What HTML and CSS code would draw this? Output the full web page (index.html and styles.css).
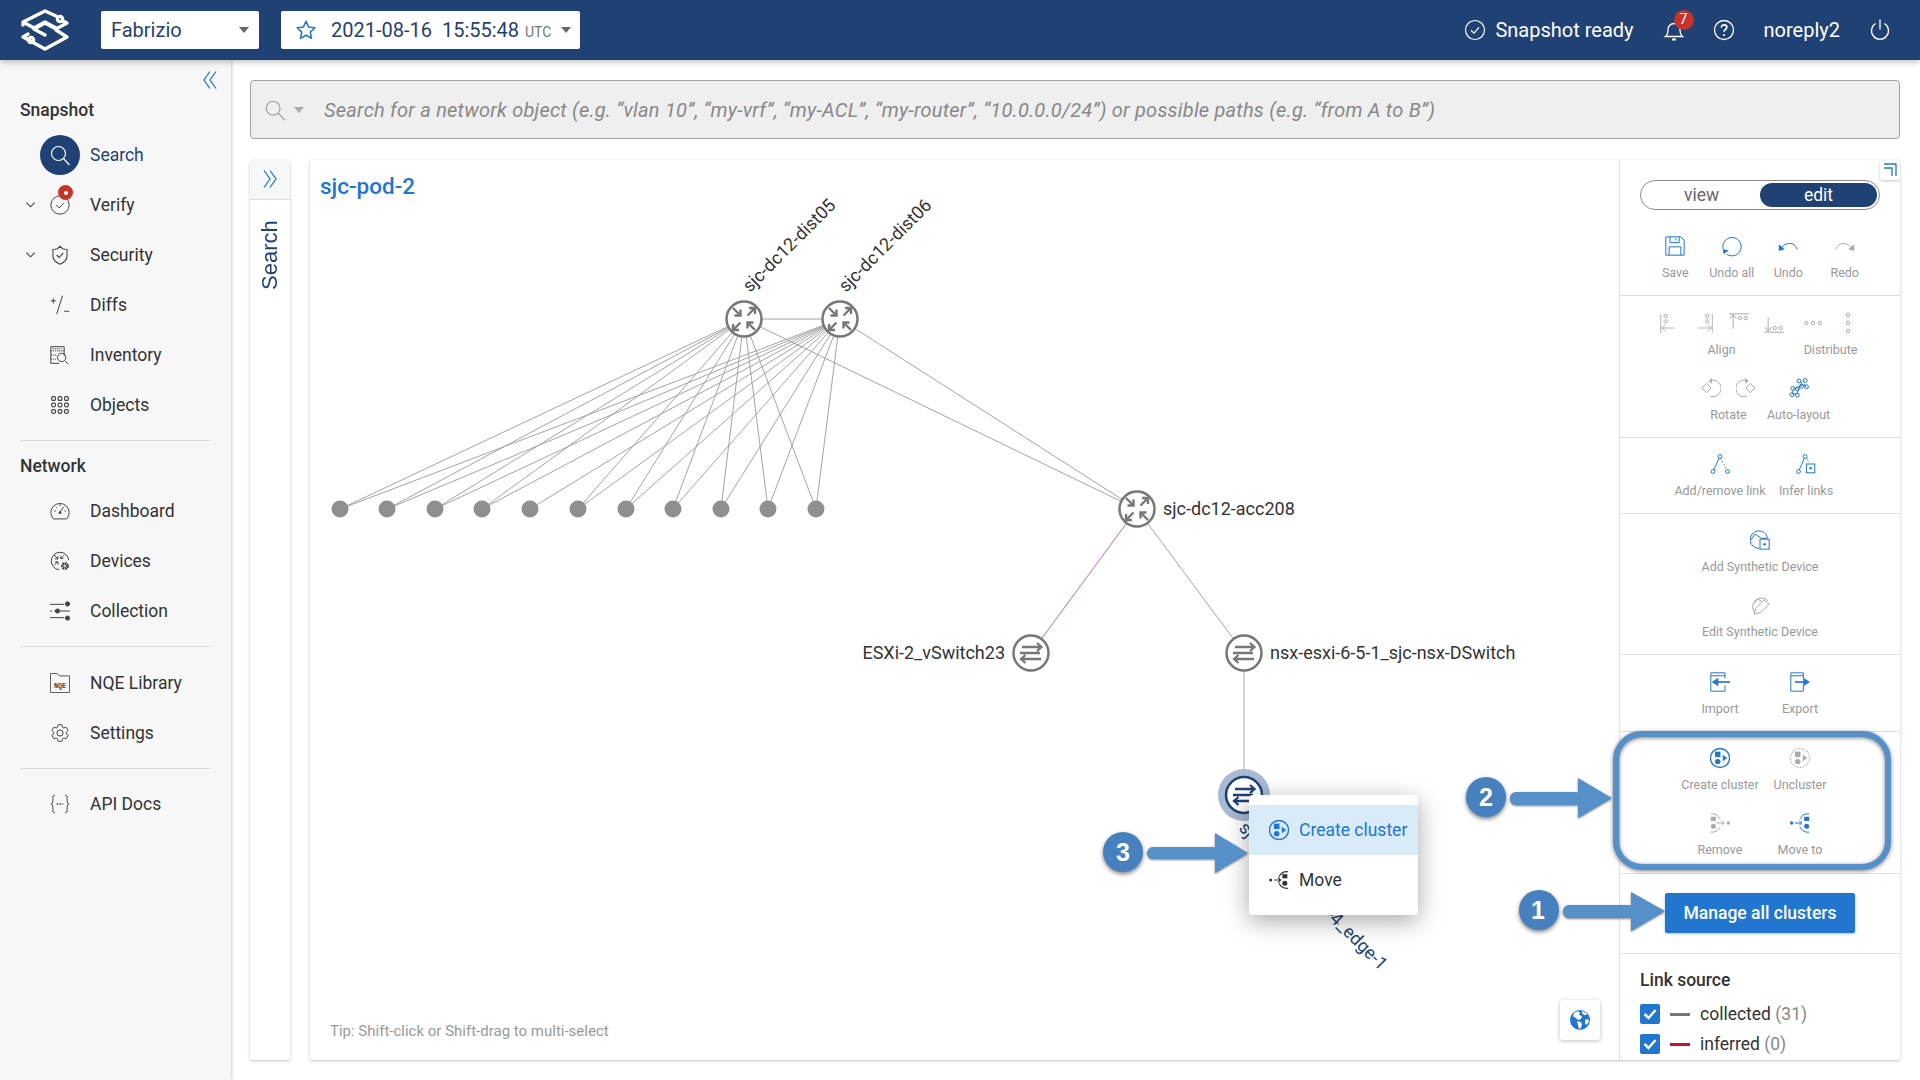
FILE: index.html
```html
<!DOCTYPE html>
<html lang="en">
<head>
<meta charset="utf-8">
<title>sjc-pod-2</title>
<link rel="stylesheet" href="styles.css">
</head>
<body>
<header class="topbar">
  <svg class="logo" viewBox="0 0 50 42" fill="none" stroke="#fff" stroke-width="3.4" stroke-linejoin="round" stroke-linecap="round">
    <path d="M36 7 25 2 3 13l11 6 11-6 11 6"/><path d="M43 12l4 2-11 6-11-6-11 6 11 6"/>
    <path d="M36 21l11 7-22 12L3 28l5-3"/><path d="M3 16l0-1"/>
    <circle cx="40" cy="10" r="2.6"/><circle cx="11" cy="31" r="2.6"/>
  </svg>
  <div class="select select-net"><span class="select-text">Fabrizio</span><i class="caret"></i></div>
  <div class="select select-date">
    <svg class="star" viewBox="0 0 24 24" fill="none" stroke="#2176cf" stroke-width="1.7" stroke-linejoin="round"><path d="M12 2.5l2.9 6.3 6.8.8-5 4.7 1.3 6.8-6-3.4-6 3.4 1.3-6.8-5-4.7 6.8-.8z"/></svg>
    <span class="select-text">2021-08-16&nbsp; 15:55:48</span><span class="utc">UTC</span><i class="caret"></i>
  </div>
  <div class="top-right">
    <svg class="ti" viewBox="0 0 24 24" fill="none" stroke="#fff" stroke-width="1.2"><circle cx="12" cy="12" r="9.5"/><path d="M8 12.3l3 2.8 5-5.8"/></svg>
    <span class="status">Snapshot ready</span>
    <div class="bell">
      <svg class="ti" viewBox="0 0 24 24" fill="none" stroke="#fff" stroke-width="1.3"><path d="M3.5 18.5c2-1.5 2.5-3.5 2.5-7 0-3.5 2.700-6 6-6s6 2.500 6 6c0 3.500.5 5.500 2.500 7z"/><path d="M10 21.500h4" stroke-width="2"/></svg>
      <span class="badge">7</span>
    </div>
    <svg class="ti help" viewBox="0 0 24 24" fill="none" stroke="#fff" stroke-width="1.3"><circle cx="12" cy="12" r="9.500"/><path d="M9.300 9.500c0-1.600 1.200-2.700 2.800-2.700s2.700 1 2.700 2.400c0 2.300-2.800 2.300-2.800 4.600" stroke-width="1.700"/><circle cx="12" cy="17" r="1" fill="#fff" stroke="none"/></svg>
    <span class="user">noreply2</span>
    <svg class="ti power" viewBox="0 0 24 24" fill="none" stroke="#fff" stroke-width="1.3"><path d="M7.500 5.500a8.500 8.500 0 1 0 9 0"/><path d="M12 1.500v10"/></svg>
  </div>
</header>

<div class="page">
  <nav class="sidebar">
    <div class="collapse-row"><svg class="dbl" viewBox="0 0 14 20" fill="none" stroke="#2176cf" stroke-width="1.300"><path d="M7 1.500 1 10l6 8.500M13 1.500 7 10l6 8.500"/></svg></div>
    <div class="nav-head first">Snapshot</div>
    <div class="nav-row">
      <span class="nav-icon active"><svg viewBox="0 0 24 24" fill="none" stroke="#fff" stroke-width="1.200"><circle cx="10.500" cy="10.500" r="7"/><path d="M15.500 15.500l6 6.500"/></svg></span>
      <span class="nav-text nav-active">Search</span>
    </div>
    <div class="nav-row">
      <svg class="chev" viewBox="0 0 12 8" fill="none" stroke="#444" stroke-width="1.200"><path d="M1.500 1.500 6 6l4.500-4.500"/></svg>
      <span class="nav-icon"><svg viewBox="0 0 24 24" fill="none" stroke="#444" stroke-width="1.200"><circle cx="12" cy="12" r="11"/><path d="M7.500 12l3.500 3.500 5.500-6"/></svg><i class="dot"></i></span>
      <span class="nav-text">Verify</span>
    </div>
    <div class="nav-row">
      <svg class="chev" viewBox="0 0 12 8" fill="none" stroke="#444" stroke-width="1.200"><path d="M1.500 1.500 6 6l4.500-4.500"/></svg>
      <span class="nav-icon"><svg viewBox="0 0 24 24" fill="none" stroke="#444" stroke-width="1.300"><path d="M12 1.500l3 3 5.500 1v8c0 4-4 7.500-8.500 9.500-4.500-2-8.500-5.500-8.500-9.500v-8l5.500-1z"/><path d="M8 12l3 3 5-5.500"/></svg></span>
      <span class="nav-text">Security</span>
    </div>
    <div class="nav-row">
      <span class="nav-icon"><svg viewBox="0 0 24 24" fill="none" stroke="#444" stroke-width="1.200"><path d="M15 1 8 23M1 7h6M4 4v6M17 19.500h6"/></svg></span>
      <span class="nav-text">Diffs</span>
    </div>
    <div class="nav-row">
      <span class="nav-icon"><svg viewBox="0 0 24 24" fill="none" stroke="#444" stroke-width="1.200"><path d="M17 13V2H1v20h10"/><path d="M1 7h16M1 12h7M1 17h6M3 4.500h11" stroke-dasharray="1.500 1"/><circle cx="14" cy="15" r="5"/><path d="M18 19l4 4"/></svg></span>
      <span class="nav-text">Inventory</span>
    </div>
    <div class="nav-row">
      <span class="nav-icon"><svg viewBox="0 0 24 24" fill="none" stroke="#444" stroke-width="1.400"><rect x="2" y="2" width="4.500" height="4.500" rx="1.500"/><rect x="9.700" y="2" width="4.500" height="4.500" rx="1.500"/><rect x="17.500" y="2" width="4.500" height="4.500" rx="1.500"/><rect x="2" y="9.700" width="4.500" height="4.500" rx="1.500"/><rect x="9.700" y="9.700" width="4.500" height="4.500" rx="1.500"/><rect x="17.500" y="9.700" width="4.500" height="4.500" rx="1.500"/><rect x="2" y="17.500" width="4.500" height="4.500" rx="1.500"/><rect x="9.700" y="17.500" width="4.500" height="4.500" rx="1.500"/><rect x="17.500" y="17.500" width="4.500" height="4.500" rx="1.500"/></svg></span>
      <span class="nav-text">Objects</span>
    </div>
    <hr class="nav-rule">
    <div class="nav-head">Network</div>
    <div class="nav-row">
      <span class="nav-icon"><svg viewBox="0 0 24 24" fill="none" stroke="#444" stroke-width="1.200"><path d="M4 21.500a11 11 0 1 1 16 0z"/><path d="M12 13l4.500-6M12 4v2M5 12h2M19 12h-1.500M7 7l1 1" /><circle cx="12" cy="14" r="1.200" fill="#444"/></svg></span>
      <span class="nav-text">Dashboard</span>
    </div>
    <div class="nav-row">
      <span class="nav-icon"><svg viewBox="0 0 24 24" fill="none" stroke="#444" stroke-width="1.200"><path d="M11 22.500A10.500 10.500 0 1 1 22.500 11"/><path d="M5 5l4.500 4.500M9.500 6v3.500H6M17 5l-4 4M13 6v3h3M5 17l4-4M6 13h3.500v3.500"/><circle cx="18" cy="18" r="3" stroke-width="3.500" stroke-dasharray="2 .7"/></svg></span>
      <span class="nav-text">Devices</span>
    </div>
    <div class="nav-row">
      <span class="nav-icon"><svg viewBox="0 0 24 24" fill="none" stroke="#444" stroke-width="1.200"><path d="M0 4h17M0 12h2.500M5 12h1.500M12 12h12M0 20h17"/><circle cx="21" cy="3.500" r="2.500" fill="#444"/><circle cx="9" cy="12" r="2.500" fill="#444"/><circle cx="21" cy="20.500" r="2.500" fill="#444"/></svg></span>
      <span class="nav-text">Collection</span>
    </div>
    <hr class="nav-rule">
    <div class="nav-row">
      <span class="nav-icon"><svg viewBox="0 0 24 24" fill="none" stroke="#444" stroke-width="1.100"><path d="M0.500 23.500V.5h8l3 3h12v20z"/><text x="12" y="17.500" text-anchor="middle" class="nqe-text">NQE</text></svg></span>
      <span class="nav-text">NQE Library</span>
    </div>
    <div class="nav-row">
      <span class="nav-icon"><svg viewBox="0 0 24 24" fill="none" stroke="#444" stroke-width="1.200"><path d="M19.430 12.980c.04-.32.07-.64.07-.98s-.03-.66-.07-.98l2.110-1.650c.19-.15.24-.42.12-.64l-2-3.460c-.12-.22-.39-.3-.61-.22l-2.490 1c-.52-.4-1.080-.73-1.690-.98l-.38-2.650C14.460 2.180 14.250 2 14 2h-4c-.25 0-.46.18-.49.42l-.38 2.650c-.61.25-1.170.59-1.690.98l-2.490-1c-.23-.09-.49 0-.61.22l-2 3.460c-.13.22-.07.49.12.64l2.110 1.650c-.04.32-.07.65-.07.98s.03.66.07.98l-2.110 1.650c-.19.15-.24.42-.12.64l2 3.460c.12.22.39.3.61.22l2.490-1c.52.4 1.080.73 1.690.98l.38 2.650c.03.24.24.42.49.42h4c.25 0 .46-.18.49-.42l.38-2.650c.61-.25 1.170-.59 1.690-.98l2.490 1c.23.09.49 0 .61-.22l2-3.460c.12-.22.07-.49-.12-.64l-2.110-1.650z"/><circle cx="12" cy="12" r="3.700"/></svg></span>
      <span class="nav-text">Settings</span>
    </div>
    <hr class="nav-rule nav-rule-tight">
    <div class="nav-row">
      <span class="nav-icon"><svg viewBox="0 0 24 24" fill="none" stroke="#444" stroke-width="1.200"><path d="M6 1.500C3 1.500 3.500 4 3.500 7.500c0 3-1 4.500-2.500 4.500 1.500 0 2.500 1.500 2.500 4.500 0 3.500-.5 6 2.500 6M18 1.500c3 0 2.500 2.500 2.500 6 0 3 1 4.500 2.500 4.500-1.500 0-2.500 1.500-2.500 4.500 0 3.500.5 6-2.500 6"/><path d="M8 12h8" stroke-width="2" stroke-dasharray="2 1.500"/></svg></span>
      <span class="nav-text">API Docs</span>
    </div>
  </nav>

  <main class="main">
    <div class="searchbar">
      <svg class="sb-icon" viewBox="0 0 24 24" fill="none" stroke="#999" stroke-width="1.200"><circle cx="10" cy="10" r="7.500"/><path d="M15.500 15.500l7 7.500"/></svg>
      <i class="caret caret-gray"></i>
      <span class="placeholder">Search for a network object (e.g. “vlan 10”, “my-vrf”, “my-ACL”, “my-router”, “10.0.0.0/24”) or possible paths (e.g. “from A to B”)</span>
    </div>
    <div class="workspace">
      <aside class="sidetab">
        <div class="sidetab-top"><svg class="dbl" viewBox="0 0 14 20" fill="none" stroke="#2176cf" stroke-width="1.300"><path d="M1 1.500 7 10l-6 8.500M7 1.500 13 10l-6 8.500"/></svg></div>
        <div class="sidetab-label">Search</div>
      </aside>
      <section class="canvas">
        <div class="graph">
          <h1 class="graph-title">sjc-pod-2</h1>
          <svg class="graph-svg" viewBox="310 160 1309 900">
            <defs>
              <g id="router">
                <circle r="17.500" fill="#fff" stroke="#777" stroke-width="2.500"/>
                <g fill="none" stroke="#777" stroke-width="2.400">
                  <path d="M-11-11-3.500-3.500M-3.500-9.500v6h-6"/>
                  <path d="M3.500-3.500 11-11M5-11h6v6"/>
                  <path d="M-3.500 3.500-11 11M-11 5v6h6"/>
                  <path d="M11 11 3.500 3.500M3.500 9.500v-6h6"/>
                </g>
              </g>
              <g id="switch">
                <circle r="17.500" fill="#fff" stroke="#777" stroke-width="2.500"/>
                <g fill="none" stroke="#777" stroke-width="2.300">
                  <path d="M-9-6H10M6-10l4.500 4-4.500 4M-11 0H9M-10 6H10M-5.500 2-10 6l4.500 4"/>
                </g>
              </g>
              <g id="switch-sel">
                <circle r="26" fill="#a9bbd2"/>
                <circle r="18" fill="#fff" stroke="#1f4173" stroke-width="2.500"/>
                <g fill="none" stroke="#1f4173" stroke-width="2.300">
                  <path d="M-9-6H10M6-10l4.500 4-4.500 4M-11 0H9M-10 6H10M-5.500 2-10 6l4.500 4"/>
                </g>
              </g>
            </defs>
            <g class="links">
              <line x1="744" y1="319" x2="840" y2="319"/>
              <line x1="744" y1="319" x2="340" y2="509"/><line x1="744" y1="319" x2="387" y2="509"/><line x1="744" y1="319" x2="435" y2="509"/><line x1="744" y1="319" x2="482" y2="509"/><line x1="744" y1="319" x2="578" y2="509"/><line x1="744" y1="319" x2="626" y2="509"/><line x1="744" y1="319" x2="673" y2="509"/><line x1="744" y1="319" x2="721" y2="509"/><line x1="744" y1="319" x2="768" y2="509"/><line x1="744" y1="319" x2="816" y2="509"/>
              <line x1="840" y1="319" x2="340" y2="509"/><line x1="840" y1="319" x2="387" y2="509"/><line x1="840" y1="319" x2="435" y2="509"/><line x1="840" y1="319" x2="482" y2="509"/><line x1="840" y1="319" x2="530" y2="509"/><line x1="840" y1="319" x2="578" y2="509"/><line x1="840" y1="319" x2="626" y2="509"/><line x1="840" y1="319" x2="673" y2="509"/><line x1="840" y1="319" x2="721" y2="509"/><line x1="840" y1="319" x2="768" y2="509"/><line x1="840" y1="319" x2="816" y2="509"/>
              <line x1="744" y1="319" x2="1137" y2="509"/><line x1="840" y1="319" x2="1137" y2="509"/>
              <line x1="1137" y1="509" x2="1244" y2="653"/><line x1="1244" y1="653" x2="1244" y2="795"/>
              <line class="link-purple" x1="1137" y1="509" x2="1031" y2="653"/>
            </g>
            <g class="leaves">
              <circle cx="340" cy="509" r="8.500"/><circle cx="387" cy="509" r="8.500"/><circle cx="435" cy="509" r="8.500"/><circle cx="482" cy="509" r="8.500"/><circle cx="530" cy="509" r="8.500"/><circle cx="578" cy="509" r="8.500"/><circle cx="626" cy="509" r="8.500"/><circle cx="673" cy="509" r="8.500"/><circle cx="721" cy="509" r="8.500"/><circle cx="768" cy="509" r="8.500"/><circle cx="816" cy="509" r="8.500"/>
            </g>
            <use href="#router" x="744" y="319"/>
            <use href="#router" x="840" y="319"/>
            <use href="#router" x="1137" y="509"/>
            <use href="#switch" x="1031" y="653"/>
            <use href="#switch" x="1244" y="653"/>
            <use href="#switch-sel" x="1244" y="795"/>
            <text class="node-label" transform="translate(750 293) rotate(-45)">sjc-dc12-dist05</text>
            <text class="node-label" transform="translate(846 293) rotate(-45)">sjc-dc12-dist06</text>
            <text class="node-label" x="1163" y="515">sjc-dc12-acc208</text>
            <text class="node-label" x="1005" y="659" text-anchor="end">ESXi-2_vSwitch23</text>
            <text class="node-label" x="1270" y="659">nsx-esxi-6-5-1_sjc-nsx-DSwitch</text>
            <text class="node-label node-label-sel" transform="translate(1238 829) rotate(45)">sjc-nsx-esxi-6-5-4_edge-1</text>
          </svg>
          <div class="tip">Tip: Shift-click or Shift-drag to multi-select</div>
          <div class="globe-btn">
            <svg viewBox="0 0 24 24"><circle cx="12" cy="12" r="10" fill="#2176cf"/><path fill="#fff" d="M6 5l4-2 2 2-1 2 3 1-1 3-3 1-2-2-2-1-1-1zM14 3l4 2 1 2-3 0-2-2zM9 13l4 1 1 3-2 4-1 0-1-4zM17 12l3-1 1 3-3 3-1-2z"/></svg>
          </div>
          <div class="context-menu">
            <div class="menu-row menu-row-hi">
              <svg class="menu-icon" viewBox="1 1 22 22" fill="none" stroke="#2176cf" stroke-width="1.500"><circle cx="12" cy="12" r="10.500"/><rect x="6.500" y="5" width="6" height="6" fill="#2176cf" stroke="none"/><circle cx="9.500" cy="16" r="3" fill="#2176cf" stroke="none"/><path d="M15 8.500l5 3.500-5 3.500z" fill="#2176cf" stroke="none"/></svg>
              <span>Create cluster</span>
            </div>
            <div class="menu-row">
              <svg class="menu-icon" viewBox="0 0 24 24" fill="none" stroke="#333" stroke-width="1.300"><circle cx="2" cy="12" r="1.800" fill="#333" stroke="none"/><path d="M6 12h8M11 9l3 3-3 3"/><path d="M23 2a11 11 0 0 0-11 6M23 22a11 11 0 0 1-11-6"/><rect x="16" y="5" width="6" height="5" fill="#333" stroke="none"/><circle cx="19" cy="16" r="3" fill="#333" stroke="none"/></svg>
              <span>Move</span>
            </div>
          </div>
        </div>

        <aside class="tools">
          <svg class="expand" viewBox="0 0 20 20" fill="none" stroke="#2176cf" stroke-width="1.300"><path d="M4 4h12v12M4 8h8v8"/></svg>
          <div class="tool-section sec-top">
            <div class="toggle"><span class="toggle-opt">view</span><span class="toggle-opt toggle-on">edit</span></div>
            <div class="tool-row four">
              <div class="tool"><svg class="ticon on" viewBox="0 0 24 24"><path d="M1 1h18l4 4v18H1zM6 1v7h11V1M13 2.500v3M5 23v-10h14v10"/></svg><span>Save</span></div>
              <div class="tool"><svg class="ticon on" viewBox="0 0 24 24"><path d="M6 22a11 11 0 1 0-4.500-6"/><path d="M1 16l7 1-6 5z" class="solid"/></svg><span>Undo all</span></div>
              <div class="tool"><svg class="ticon on" viewBox="0 0 24 24"><path d="M23 16c-2-5-5-7-9-7-3 0-6 1-9 4"/><path d="M1 10l7 6-7 2z" class="solid"/></svg><span>Undo</span></div>
              <div class="tool"><svg class="ticon off" viewBox="0 0 24 24"><path d="M1 16c2-5 5-7 9-7 3 0 6 1 9 4"/><path d="M23 10l-7 6 7 2z" class="solid"/></svg><span>Redo</span></div>
            </div>
          </div>
          <div class="tool-section sec-align">
            <div class="align-row">
              <div class="tool group-align">
                <div class="icons">
                  <svg class="ticon off" viewBox="0 0 24 24"><path d="M2 1v23M3 18h16M8 14l-5 4 5 4" stroke-width="1"/><circle cx="8" cy="3.500" r="2"/><circle cx="8" cy="10" r="2"/></svg>
                  <svg class="ticon off" viewBox="0 0 24 24"><path d="M22 1v23M5 18h16M16 14l5 4-5 4" stroke-width="1"/><circle cx="16" cy="3.500" r="2"/><circle cx="16" cy="10" r="2"/></svg>
                  <svg class="ticon off" viewBox="0 0 24 24"><path d="M0 1h24M5 2v17M1 7l4-5 4 5"/><circle cx="13" cy="6" r="2"/><circle cx="20" cy="6" r="2"/></svg>
                  <svg class="ticon off" viewBox="0 0 24 24"><path d="M0 23h24M5 5v17M1 17l4 5 4-5"/><circle cx="13" cy="18" r="2"/><circle cx="20" cy="18" r="2"/></svg>
                </div>
                <span>Align</span>
              </div>
              <div class="tool group-dist">
                <div class="icons">
                  <svg class="ticon off" viewBox="0 0 24 24"><circle cx="4" cy="12" r="2"/><circle cx="12" cy="12" r="2"/><circle cx="20" cy="12" r="2"/></svg>
                  <svg class="ticon off" viewBox="0 0 24 24"><circle cx="12" cy="2.500" r="2"/><circle cx="12" cy="12" r="2"/><circle cx="12" cy="21.500" r="2"/></svg>
                </div>
                <span>Distribute</span>
              </div>
            </div>
            <div class="rotate-row">
              <div class="tool group-rotate">
                <div class="icons">
                  <svg class="ticon off" viewBox="0 0 24 24"><path d="M7 6.500l5 5.500-5 5.500L1 12z"/><path d="M11 3a10 10 0 1 1 0 19"/><path d="M13 0v7l-4-3.500z" class="solid"/></svg>
                  <svg class="ticon off" viewBox="0 0 24 24"><path d="M17 6.500l6 5.500-6 5.500L12 12z"/><path d="M13 3a10 10 0 1 0 0 19"/><path d="M11 0v7l4-3.500z" class="solid"/></svg>
                </div>
                <span>Rotate</span>
              </div>
              <div class="tool">
                <svg class="ticon on" viewBox="0 0 24 24"><path d="M7 13l5-2 6-4 2 4M12 11l-2 8M12 11l4-7M5 14l-1 5 6 0" stroke-width="1.100"/><circle cx="4.500" cy="12.500" r="2.300"/><circle cx="3.500" cy="20" r="2.300"/><circle cx="10" cy="20.500" r="2.300"/><circle cx="10" cy="13" r="2.300"/><circle cx="15" cy="10" r="2.300"/><circle cx="12" cy="3.500" r="2.300"/><circle cx="19.500" cy="3" r="2.300"/><circle cx="21" cy="10.500" r="2.300"/></svg>
                <span>Auto-layout</span>
              </div>
            </div>
          </div>
          <div class="tool-section sec-mid">
            <div class="tool-row two wide">
              <div class="tool"><svg class="ticon on" viewBox="0 0 24 24"><circle cx="12" cy="3" r="2.300"/><circle cx="3.500" cy="21" r="2.300"/><circle cx="21" cy="21" r="2.300"/><path d="M11 5 4.500 19"/><path d="M13 5l7 14" stroke-dasharray="1.500 2.500"/></svg><span>Add/remove link</span></div>
              <div class="tool"><svg class="ticon on" viewBox="0 0 24 24"><circle cx="11" cy="3" r="2.300"/><circle cx="3" cy="21" r="2.300"/><path d="M10 5 4 19"/><path d="M13 5l2 5" stroke-dasharray="1.500 1.500"/><rect x="12.500" y="12" width="10" height="10.500"/><circle cx="17.500" cy="17" r="1.500" class="solid"/></svg><span>Infer links</span></div>
            </div>
          </div>
          <div class="tool-section sec-synth">
            <div class="tool"><svg class="ticon on" viewBox="0 0 24 24"><path d="M11 22A10.500 10.500 0 1 1 21 9.500"/><path d="M1 12l5-7 8 5h7"/><rect x="12" y="11" width="11" height="12"/><circle cx="17.500" cy="17" r="1.500" class="solid"/></svg><span>Add Synthetic Device</span></div>
            <div class="tool"><svg class="ticon off" viewBox="0 0 24 24"><path d="M6 21.500A10.500 10.500 0 1 1 21.500 7"/><path d="M5 10l4-5 6 3"/><path d="M5 23l2-7L17 6l6 5-10 10z"/></svg><span>Edit Synthetic Device</span></div>
          </div>
          <div class="tool-section sec-io">
            <div class="tool-row two">
              <div class="tool"><svg class="ticon on" viewBox="0 0 24 24"><path d="M18 8V1H1v22h17v-7M1 4.500h17"/><path d="M24 12H8" stroke-width="2"/><path d="M2 12l8-5v10z" class="solid"/></svg><span>Import</span></div>
              <div class="tool"><svg class="ticon on" viewBox="0 0 24 24"><path d="M16 8V1H1v22h15v-7M1 4.500h15"/><path d="M6 12h12" stroke-width="2"/><path d="M24 12l-8-5v10z" class="solid"/></svg><span>Export</span></div>
            </div>
          </div>
          <div class="tool-section sec-cluster">
            <div class="tool-row two cluster-grid">
              <div class="tool"><svg class="ticon on" viewBox="1 1 22 22"><circle cx="12" cy="12" r="10.500" stroke-width="1.500"/><rect x="6.500" y="5" width="6" height="6" class="solid"/><circle cx="9.500" cy="16" r="3" class="solid"/><path d="M15 8.500l5 3.500-5 3.500z" class="solid"/></svg><span>Create cluster</span></div>
              <div class="tool"><svg class="ticon off" viewBox="1 1 22 22"><circle cx="12" cy="12" r="10.500" stroke-dasharray="1.500 1.500"/><rect x="6.500" y="5" width="6" height="6" class="solid"/><circle cx="9.500" cy="16" r="3" class="solid"/><path d="M15 8.500l5 3.500-5 3.500z" class="solid"/></svg><span>Uncluster</span></div>
              <div class="tool"><svg class="ticon off" viewBox="0 0 24 24"><circle cx="22" cy="12" r="2" class="solid"/><path d="M8 12h9M14 9l3 3-3 3"/><path d="M1 1a11 11 0 0 1 11 6M1 23a11 11 0 0 0 11-6"/><rect x="1" y="4.500" width="6" height="5" class="solid"/><circle cx="4" cy="16" r="3" class="solid"/></svg><span>Remove</span></div>
              <div class="tool"><svg class="ticon on" viewBox="0 0 24 24"><circle cx="2" cy="12" r="2" class="solid"/><path d="M6 12h8M11 9l3 3-3 3"/><path d="M23 1a11 11 0 0 0-11 6M23 23a11 11 0 0 1-11-6"/><rect x="17" y="4.500" width="6" height="5" class="solid"/><circle cx="20" cy="16" r="3" class="solid"/></svg><span>Move to</span></div>
            </div>
          </div>
          <div class="tool-section sec-manage"><button class="manage-btn" type="button">Manage all clusters</button></div>
          <div class="sec-legend">
            <div class="legend-title">Link source</div>
            <div class="legend-row">
              <span class="check"><svg viewBox="0 0 20 20" fill="none" stroke="#fff" stroke-width="2.500"><path d="M4.500 10l4 4 7-8"/></svg></span>
              <i class="dash"></i><span>collected <em>(31)</em></span>
            </div>
            <div class="legend-row">
              <span class="check"><svg viewBox="0 0 20 20" fill="none" stroke="#fff" stroke-width="2.500"><path d="M4.500 10l4 4 7-8"/></svg></span>
              <i class="dash dash-red"></i><span>inferred <em>(0)</em></span>
            </div>
          </div>
        </aside>
      </section>
    </div>
  </main>
</div>

<svg class="annotations" viewBox="0 0 1920 1080">
  <rect class="hl" x="1616" y="734" width="272" height="133" rx="26"/>
  <g class="arrow">
    <rect x="1510" y="792" width="72" height="13" rx="6"/><path d="M1578 778l34 20-34 20z"/>
    <rect x="1563" y="905" width="72" height="13" rx="6"/><path d="M1631 892l34 19-34 20z"/>
    <rect x="1147" y="847" width="72" height="12" rx="6"/><path d="M1215 833l33 20-33 20z"/>
  </g>
  <g class="bullet">
    <circle cx="1486" cy="797" r="20"/><circle cx="1539" cy="910" r="20"/><circle cx="1123" cy="852" r="20"/>
  </g>
  <text class="bullet-num" x="1486" y="806">2</text>
  <text class="bullet-num" x="1538" y="919">1</text>
  <text class="bullet-num" x="1123" y="861">3</text>
</svg>
</body>
</html>
```
FILE: styles.css
```css
* { box-sizing: border-box; }
html, body { margin: 0; height: 100%; }
body { font-family: Roboto, "Liberation Sans", sans-serif; color: #333; background: #fff; overflow: hidden; width: 1920px; height: 1080px; }

/* top bar */
.topbar { height: 60px; background: #1f4173; display: flex; align-items: center; box-shadow: 0 2px 6px rgba(0,0,0,.25); position: relative; z-index: 3; padding-left: 20px; }
.logo { width: 50px; height: 42px; margin-right: 31px; flex: none; }
.select { height: 38px; background: #fff; border-radius: 2px; display: flex; align-items: center; color: #1f4173; font-size: 20px; }
.select-net { width: 158px; padding: 0 10px; margin-right: 22px; justify-content: space-between; }
.select-date { width: 299px; padding: 0 10px 0 14px; }
.select-text { white-space: nowrap; }
.star { width: 22px; height: 22px; margin-right: 14px; flex: none; }
.utc { font-size: 14px; color: #777; margin: 4px 0 0 6px; }
.caret { width: 0; height: 0; border: 5px solid transparent; border-top: 6px solid #666; border-bottom: 0; display: block; flex: none; }
.select-date .caret { margin-left: 10px; }
.top-right { margin-left: auto; display: flex; align-items: center; color: #fff; font-size: 20px; padding-right: 28px; }
.ti { width: 24px; height: 24px; display: block; flex: none; }
.status { margin-left: 8px; margin-right: 28px; }
.bell { position: relative; width: 24px; height: 24px; margin-right: 26px; }
.badge { position: absolute; left: 12px; top: -8px; width: 20px; height: 20px; border-radius: 50%; background: #c5342a; color: #fff; font-size: 14px; text-align: center; line-height: 19px; }
.help { margin-right: 28px; }
.user { margin-right: 28px; }

/* layout */
.page { display: flex; height: 1020px; }
.sidebar { width: 231px; flex: none; background: #f7f7f7; box-shadow: 1px 0 3px rgba(0,0,0,.2); font-size: 17.5px; display: flex; flex-direction: column; position: relative; z-index: 1; }
.collapse-row { height: 40px; display: flex; align-items: center; justify-content: flex-end; padding-right: 14px; flex: none; }
.dbl { width: 14px; height: 20px; display: block; }
.nav-head { height: 20px; line-height: 20px; padding-left: 20px; font-weight: 500; color: #333; margin: 4px 0 10px; flex: none; }
.nav-head.first { margin: 0 0 10px; }
.nav-row { height: 50px; display: flex; align-items: center; position: relative; padding-left: 40px; flex: none; }
.chev { position: absolute; left: 25px; top: 21px; width: 11px; height: 8px; }
.nav-icon { width: 40px; height: 40px; display: flex; align-items: center; justify-content: center; position: relative; margin-right: 10px; flex: none; }
.nav-icon svg { width: 20px; height: 20px; display: block; }
.nav-icon.active { background: #1f4173; border-radius: 50%; }
.nav-icon.active svg { width: 24px; height: 24px; }
.nav-text { color: #333; }
.nav-active { color: #1f4173; }
.dot { position: absolute; left: 18px; top: 0; width: 15px; height: 15px; border-radius: 50%; background: #c5342a; }
.dot::after { content: ""; position: absolute; left: 5.500px; top: 5.500px; width: 4px; height: 4px; border-radius: 50%; background: #fff; }
.nav-rule { border: 0; border-top: 1px solid #d8d8d8; margin: 10px 20px 11px; flex: none; width: 190px; }
.nav-rule-tight { margin-bottom: 10px; }
.nqe-text { font: 700 8px "Liberation Mono", monospace; fill: #444; stroke: none; }

.main { flex: 1; min-width: 0; padding: 20px 20px 20px 19px; display: flex; flex-direction: column; gap: 21px; }
.searchbar { height: 59px; flex: none; background: #efefef; border: 1.500px solid #a0a0a0; border-radius: 4px; display: flex; align-items: center; padding-left: 13px; }
.sb-icon { width: 22px; height: 22px; flex: none; }
.caret-gray { margin-left: 8px; border-top-color: #aaa; }
.placeholder { margin-left: 20px; font-style: italic; font-size: 20px; color: #888; letter-spacing: .22px; white-space: nowrap; }

.workspace { flex: 1; display: flex; gap: 20px; min-height: 0; }
.sidetab { width: 40px; flex: none; background: #fff; box-shadow: 0 1px 3px rgba(0,0,0,.25); border-radius: 2px; }
.sidetab-top { height: 40px; background: #f7f7f7; border-bottom: 1px solid #ddd; display: flex; align-items: center; justify-content: center; padding-bottom: 2px; }
.sidetab-label { writing-mode: vertical-rl; transform: rotate(180deg); font: 22px "Liberation Sans", sans-serif; color: #1f4173; height: 90px; display: flex; align-items: center; line-height: 40px; }

.canvas { flex: 1; min-width: 0; display: flex; background: #fff; box-shadow: 0 1px 3px rgba(0,0,0,.25); border-radius: 2px; overflow: hidden; position: relative; }
.graph { flex: 1; min-width: 0; position: relative; }
.graph-title { margin: 0; position: absolute; left: 10px; top: 12px; font-size: 22.5px; line-height: 28px; font-weight: 500; color: #2176cf; }
.graph-svg { display: block; width: 1309px; height: 900px; }
.links line { stroke: #9a9a9a; stroke-width: .9; }
.links .link-purple { stroke: #a860b8; }
.leaves circle { fill: #8f8f8f; }
.node-label { font: 18px Roboto, sans-serif; fill: #333; }
.node-label-sel { fill: #1f4173; }
.tip { position: absolute; left: 20px; bottom: 20px; font-size: 15px; line-height: 18px; color: #999; }
.globe-btn { position: absolute; left: 1250px; top: 840px; width: 40px; height: 40px; background: #fff; border-radius: 3px; box-shadow: 0 1px 4px rgba(0,0,0,.25); display: flex; align-items: center; justify-content: center; }
.globe-btn svg { width: 24px; height: 24px; }
.context-menu { position: absolute; left: 939px; top: 635px; width: 169px; height: 120px; background: #fff; border-radius: 4px; box-shadow: 0 6px 24px rgba(0,0,0,.35); padding-top: 10px; font-size: 17.5px; }
.menu-row { height: 50px; display: flex; align-items: center; padding-left: 20px; gap: 10px; color: #333; white-space: nowrap; }
.menu-row-hi { background: #daebf8; color: #2176cf; }
.menu-icon { width: 20px; height: 20px; flex: none; }

/* tools panel */
.tools { width: 281px; flex: none; border-left: 1px solid #e0e0e0; position: relative; display: flex; flex-direction: column; }
.expand { position: absolute; right: 0; top: 0; width: 20px; height: 20px; background: #fff; border-radius: 3px; box-shadow: 0 1px 3px rgba(0,0,0,.25); }
.tool-section { border-bottom: 1px solid #ddd; flex: none; }
.tool { display: flex; flex-direction: column; align-items: center; gap: 7px; font-size: 12.5px; line-height: 16px; color: #999; white-space: nowrap; }
.ticon { width: 20px; height: 24px; display: block; fill: none; stroke-width: 1.200; flex: none; }
.ticon.on { stroke: #2176cf; }
.ticon.off { stroke: #aaa; }
.ticon .solid { stroke: none; }
.ticon.on .solid { fill: #2176cf; }
.ticon.off .solid { fill: #aaa; }
.sec-top { height: 136px; padding: 20px 0 0 20px; }
.toggle { width: 240px; height: 30px; border: 1px solid #8a8a8a; border-radius: 15px; display: flex; padding: 2px; margin-bottom: 24px; font-size: 17.5px; }
.toggle-opt { flex: 1; text-align: center; line-height: 24px; color: #666; }
.toggle-on { background: #1f4173; color: #fff; border-radius: 13px; }
.tool-row { display: grid; }
.four { grid-template-columns: repeat(4, 56.500px); margin-left: 7px; }
.two { grid-template-columns: repeat(2, 80px); justify-content: center; }
.wide { grid-template-columns: repeat(2, 86px); padding-left: 6px; }
.sec-align { height: 142px; padding-top: 15px; }
.icons { display: flex; gap: 15px; height: 24px; }
.align-row { display: flex; padding-left: 39px; gap: 19px; }
.rotate-row { display: flex; padding-left: 81px; gap: 11px; margin-top: 18px; }
.sec-mid { height: 76px; padding-top: 14px; }
.sec-synth { height: 141px; padding-top: 14px; display: flex; flex-direction: column; gap: 18px; }
.sec-io { height: 77px; padding-top: 15px; }
.sec-cluster { height: 142px; padding-top: 14px; }
.cluster-grid { row-gap: 18px; }
.sec-manage { height: 80px; padding-top: 19px; display: flex; justify-content: center; }
.manage-btn { width: 190px; height: 40px; background: #2176cf; color: #fff; border: 0; border-radius: 2px; font: 500 17.5px Roboto, sans-serif; box-shadow: 0 1px 3px rgba(0,0,0,.25); padding: 0; }
.sec-legend { padding: 16px 0 0 20px; font-size: 17.5px; }
.legend-title { font-weight: 500; line-height: 20px; margin-bottom: 14px; color: #333; }
.legend-row { display: flex; align-items: center; height: 20px; margin-bottom: 10px; gap: 10px; }
.check { width: 20px; height: 20px; background: #2176cf; border-radius: 2px; flex: none; }
.check svg { width: 20px; height: 20px; display: block; }
.dash { width: 20px; height: 3px; background: #777; flex: none; }
.dash-red { background: #c8102e; }
.legend-row em { font-style: normal; color: #888; }

/* callouts */
.annotations { position: absolute; left: 0; top: 0; width: 1920px; height: 1080px; pointer-events: none; z-index: 5; }
.hl { fill: none; stroke: #5590c9; stroke-width: 6; filter: drop-shadow(0 1px 2px rgba(0,0,0,.5)); }
.arrow { fill: #5590c9; filter: drop-shadow(0 1px 1px rgba(0,0,0,.5)); }
.bullet { fill: #4680bf; filter: drop-shadow(0 2px 2px rgba(0,0,0,.5)); }
.bullet-num { font: 700 25px "Liberation Sans", sans-serif; fill: #fff; text-anchor: middle; }
```
